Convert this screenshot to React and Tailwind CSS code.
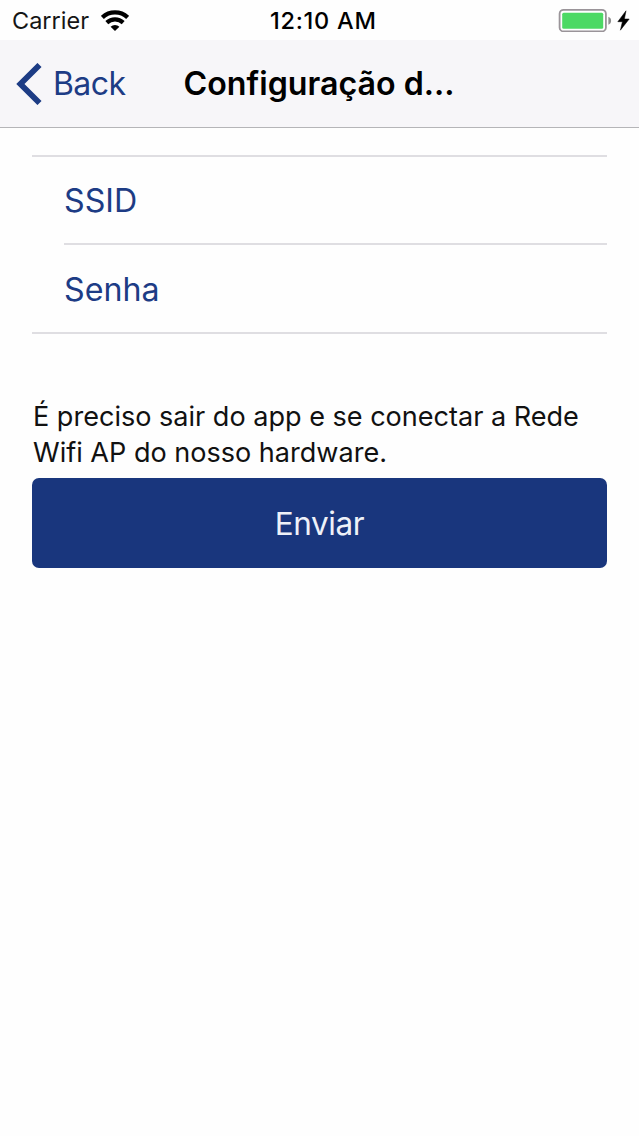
export default function App() {
  return (
    <div className="flex h-[1136px] w-[639px] flex-col overflow-hidden bg-[#fefefe] font-['Inter',sans-serif]">
      <header className="flex h-[128px] shrink-0 flex-col border-b border-[#b5b5b8] bg-[#f7f6f9] text-black">
        <div className="flex h-10 items-center bg-[#fefefe] pr-[9px] pl-3">
          <div className="flex w-[258px] items-center gap-3 pt-[2px] text-[23.5px] text-[#151515]">
            <span className="whitespace-nowrap">Carrier</span>
            <svg className="h-[22px] w-[28px]" viewBox="101 9 28 22" fill="none" stroke="#000" strokeWidth="4.2">
              <path d="M102.4 16.4a18.5 18.5 0 0 1 25.2 0M106.8 21.6a12 12 0 0 1 16.4 0" />
              <path d="M115 30l-4.4-4.3a6.4 6.4 0 0 1 8.8 0z" fill="#000" stroke="none" />
            </svg>
          </div>
          <span className="pt-[2px] text-[23.5px] font-medium tracking-[0.75px] whitespace-nowrap">12:10 AM</span>
          <div className="flex flex-1 items-center justify-end">
            <svg className="h-[24px] w-[72px]" viewBox="558 8 72 24">
              <rect x="559.6" y="9.8" width="46.3" height="21.6" rx="4" fill="none" stroke="#9a9499" strokeWidth="1.8" />
              <rect x="562.2" y="12.7" width="41" height="16" rx="1.5" fill="#4cd964" />
              <path d="M608.4 16.8c3.6 1.2 3.6 6.8 0 8z" fill="#8d8d8d" />
              <path d="M626 10.8l-8.2 10.9h4.6l-2 8.5 8.8-11.2h-4.8z" fill="#000" stroke="#000" strokeWidth="0.5" />
            </svg>
          </div>
        </div>
        <nav className="flex flex-1 items-center pl-4">
          <button className="flex w-[167.5px] items-center gap-[11px] text-[32px] tracking-[-0.6px] text-[#1d3c85]">
            <svg className="h-[42px] w-[26px]" viewBox="0 0 26 42" fill="none" stroke="currentColor" strokeWidth="5.8">
              <path d="M23.5 2L4.4 21l19.1 19" />
            </svg>
            <span>Back</span>
          </button>
          <h1 className="pt-[2px] text-[32.2px] font-semibold whitespace-nowrap">Configuração d...</h1>
        </nav>
      </header>
      <main className="flex flex-col px-8 pt-[27px]">
        <div className="flex flex-col border-y-2 border-[#dfdee2] pl-8 text-[32.2px] text-[#1d3c85]">
          <div className="flex h-[88px] items-center border-b-2 border-[#dfdee2] pt-[3px]">SSID</div>
          <div className="flex h-[87px] items-center pt-[3px]">Senha</div>
        </div>
        <p className="mt-[65px] pl-px text-[27.05px] leading-[36px] whitespace-nowrap text-[#111]">
          É preciso sair do app e se conectar a Rede<br />Wifi AP do nosso hardware.
        </p>
        <button className="mt-[7px] h-[90px] rounded-[7px] bg-[#19367d] pt-[2px] text-[31.5px] tracking-[-0.4px] text-[#eef1f8]">Enviar</button>
      </main>
    </div>
  );
}
